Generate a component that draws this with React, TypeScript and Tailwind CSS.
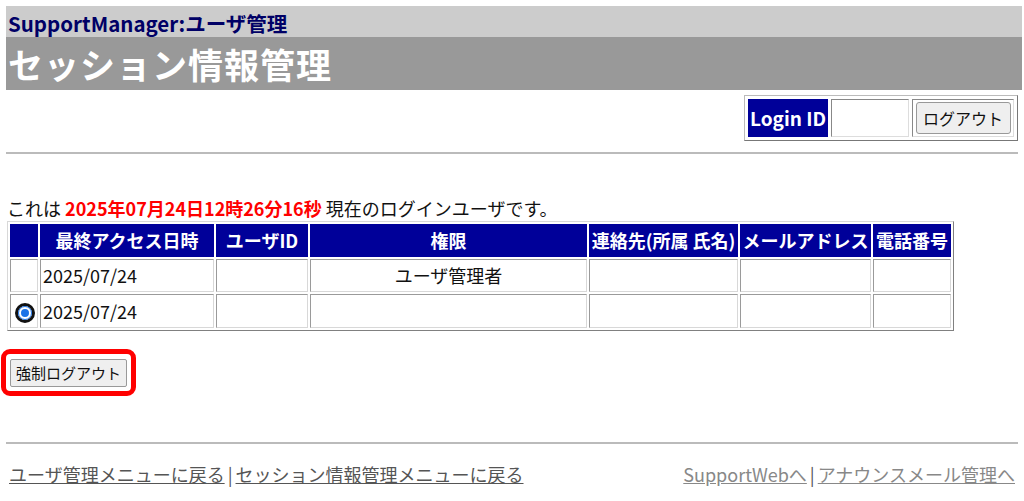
const font = { fontFamily: '"Noto Sans CJK JP", "Noto Sans", sans-serif' };

function Cell({ children, className = '' }: { children?: React.ReactNode; className?: string }) {
  return (
    <td className={`border border-[#9a9a9a] border-b-[#d8d8d8] border-r-[#d8d8d8] p-0 h-[33px] ${className}`}>
      {children}
    </td>
  );
}

function Head({ children, className = '' }: { children?: React.ReactNode; className?: string }) {
  return (
    <th className={`bg-[#000099] text-white font-bold h-[33px] p-0 border border-[#000099] whitespace-nowrap ${className}`}>
      {children}
    </th>
  );
}

function Radio() {
  return (
    <span className="inline-flex items-center justify-center w-[20px] h-[20px] rounded-full border-[3px] border-[#111] bg-white ml-[4px] mt-[3px]">
      <span className="w-[12px] h-[12px] rounded-full bg-[#1a73e8] border-2 border-white outline-1 outline-[#1a73e8]" />
    </span>
  );
}

export default function App() {
  return (
    <div className="bg-white w-[1024px] h-[501px] overflow-hidden text-[18px] text-[#111]" style={font}>
      <div className="pt-[6px] pl-[6px] pr-[2px]">
        <div className="bg-[#cccccc] h-[31px] flex items-end pl-[2px]">
          <span className="text-[20.5px] font-bold text-[#000066] leading-[28px]">SupportManager:ユーザ管理</span>
        </div>
        <div className="bg-[#999999] h-[53px] flex items-center pl-[2px]">
          <span className="text-[35px] font-bold text-white leading-none tracking-[1px]">セッション情報管理</span>
        </div>
      </div>

      <div className="flex justify-end pr-[6px] mt-[5px]">
        <table className="border border-[#bbb] border-b-[#777] border-r-[#777] border-separate border-spacing-[3px]">
          <tbody>
            <tr>
              <td className="bg-[#000099] text-white font-bold w-[80px] h-[38px] text-center text-[19px] p-0 border border-[#000099]">Login ID</td>
              <td className="w-[78px] border border-[#888] border-b-[#ddd] border-r-[#ddd] p-0" />
              <td className="w-[102px] border border-[#888] border-b-[#ddd] border-r-[#ddd] p-0 text-center">
                <button className="w-[95px] h-[32px] bg-[#efefef] border border-[#999] rounded-[3px] text-[16px]">ログアウト</button>
              </td>
            </tr>
          </tbody>
        </table>
      </div>

      <div className="mx-[6px] mt-[11px] border-t-2 border-[#bbbbbb]" />

      <div className="mt-[43px] pl-[7px] leading-[22px]">
        これは <span className="text-[#ff0000] font-bold">2025年07月24日12時26分16秒</span> 現在のログインユーザです。
      </div>

      <div className="pl-[7px] mt-[2px]">
        <table className="border border-[#d8d8d8] border-b-[#808080] border-r-[#808080] border-separate border-spacing-[2px] text-[18px]">
          <thead>
            <tr>
              <Head className="w-[28px]" />
              <Head className="w-[174px]">最終アクセス日時</Head>
              <Head className="w-[92px]">ユーザID</Head>
              <Head className="w-[277px]">権限</Head>
              <Head className="w-[149px]">連絡先(所属 氏名)</Head>
              <Head className="w-[131px]">メールアドレス</Head>
              <Head className="w-[78px]">電話番号</Head>
            </tr>
          </thead>
          <tbody>
            <tr>
              <Cell />
              <Cell className="pl-[2px]">2025/07/24</Cell>
              <Cell />
              <Cell className="text-center">ユーザ管理者</Cell>
              <Cell />
              <Cell />
              <Cell />
            </tr>
            <tr>
              <Cell className="h-[34px]"><Radio /></Cell>
              <Cell className="pl-[2px]">2025/07/24</Cell>
              <Cell />
              <Cell />
              <Cell />
              <Cell />
              <Cell />
            </tr>
          </tbody>
        </table>
      </div>

      <div className="mt-[18px] ml-[1px] inline-block border-[5px] border-[#ff0000] rounded-[9px] p-[4px]">
        <button className="h-[28px] px-[5px] bg-[#efefef] border border-[#999] rounded-[2px] text-[15px] leading-none">強制ログアウト</button>
      </div>

      <div className="mx-[6px] mt-[46px] border-t-2 border-[#bbbbbb]" />

      <div className="flex justify-between px-[9px] mt-[17px] text-[18px]">
        <div className="text-[#555]">
          <a className="underline">ユーザ管理メニューに戻る</a>
          <span className="mx-[3px]">|</span>
          <a className="underline">セッション情報管理メニューに戻る</a>
        </div>
        <div className="text-[#888]">
          <a className="underline">SupportWebへ</a>
          <span className="mx-[3px] text-[#555]">|</span>
          <a className="underline">アナウンスメール管理へ</a>
        </div>
      </div>
    </div>
  );
}
